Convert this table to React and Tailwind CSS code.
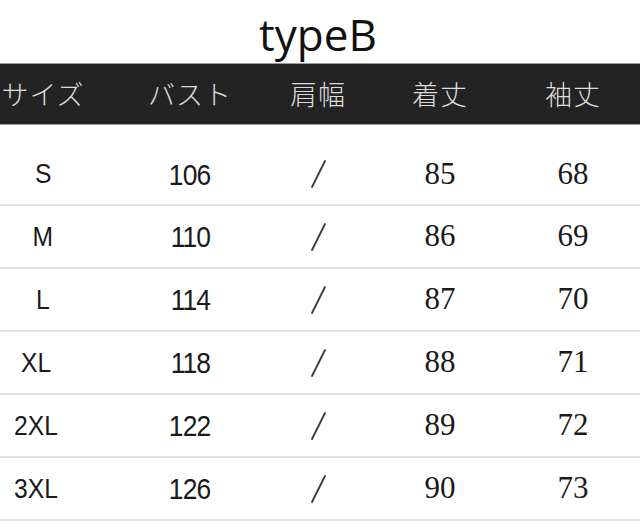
const headers = ["サイズ", "バスト", "肩幅", "着丈", "袖丈"];

const rows = [
  { size: "S", bust: "106", length: "85", sleeve: "68", shift: "" },
  { size: "M", bust: "110", length: "86", sleeve: "69", shift: "" },
  { size: "L", bust: "114", length: "87", sleeve: "70", shift: "" },
  { size: "XL", bust: "118", length: "88", sleeve: "71", shift: "pr-[14px]" },
  { size: "2XL", bust: "122", length: "89", sleeve: "72", shift: "pr-[14px]" },
  { size: "3XL", bust: "126", length: "90", sleeve: "73", shift: "pr-[14px]" },
];

const grid = "grid grid-cols-[86px_208px_48px_196px_70px_32px]";
const cell = "flex justify-center whitespace-nowrap";

function Slash() {
  return (
    <svg width="16" height="28" viewBox="0 0 16 28">
      <line x1="2" y1="27" x2="15" y2="1" stroke="#3a3a3a" strokeWidth="1.8" strokeLinecap="round" />
    </svg>
  );
}

export default function App() {
  return (
    <div className="w-[640px] h-[532px] bg-white overflow-hidden">
      {/* title */}
      <div className="h-[63px] flex items-center justify-center pr-[4px] pt-[4px]">
        <span className="font-['Open_Sans',sans-serif] text-[44px] leading-none text-[#111]">typeB</span>
      </div>

      {/* header bar */}
      <div className={`${grid} h-[62px] items-center bg-[#232323] border-y border-[#9a9a9a]`}>
        {headers.map((h) => (
          <div key={h} className={cell}>
            <span className="font-['Noto_Sans_CJK_JP',sans-serif] font-light text-[27px] tracking-[1px] text-[#dcdcdc]">
              {h}
            </span>
          </div>
        ))}
      </div>

      {/* body */}
      {rows.map((r, i) => (
        <div
          key={r.size}
          className={`${grid} items-center border-b-2 border-[#e2e2e2] ${i === 0 ? "h-[81px] pt-[19px]" : "h-[63px]"}`}
        >
          <div className={`${cell} ${r.shift}`}>
            <span className="font-['Liberation_Sans',sans-serif] text-[28px] text-[#1a1a1a] scale-x-[0.88]">{r.size}</span>
          </div>
          <div className={cell}>
            <span className="font-['Liberation_Sans',sans-serif] text-[30px] text-[#1a1a1a] tracking-[-1px] scale-x-[0.88]">{r.bust}</span>
          </div>
          <div className={cell}>
            <Slash />
          </div>
          <div className={cell}>
            <span className="font-['Liberation_Serif',serif] text-[31px] text-[#1a1a1a]">{r.length}</span>
          </div>
          <div className={cell}>
            <span className="font-['Liberation_Serif',serif] text-[31px] text-[#1a1a1a]">{r.sleeve}</span>
          </div>
          <div />
        </div>
      ))}
    </div>
  );
}
